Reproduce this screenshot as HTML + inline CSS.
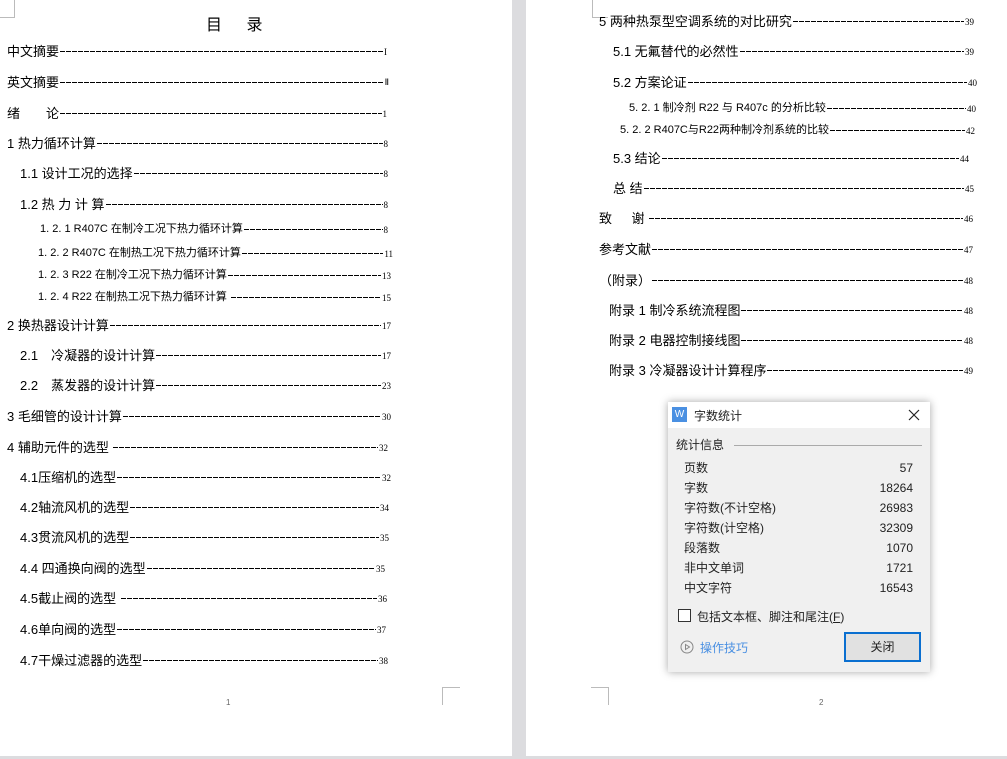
<!DOCTYPE html>
<html><head><meta charset="utf-8"><style>
*{margin:0;padding:0;box-sizing:border-box}
body{width:1007px;height:759px;background:#dcdcdf;position:relative;overflow:hidden;font-family:"Liberation Sans","Noto Sans CJK SC",sans-serif;color:#000}
.pg{position:absolute;top:0;background:#fff;height:756px}
.r{position:absolute;display:flex;align-items:center;height:18px;white-space:nowrap;font-size:13px}
.r .t{flex:none}
.r .l{flex:1;height:1px;margin:0 1px;background:repeating-linear-gradient(90deg,#000 0 5px,transparent 5px 6px);align-self:center;margin-top:2px}
.r .n{flex:none;font-family:"Liberation Serif",serif;font-size:9px;margin-top:3px}
.s{font-size:11px}
.c{position:absolute;border-color:#bbb;border-style:solid;border-width:0}
</style></head><body>
<div class="pg" style="left:0;width:512px"></div>
<div class="pg" style="left:526px;width:481px"></div>
<div class="c" style="left:0;top:0;width:15px;height:18px;border-right-width:1px;border-bottom-width:1px"></div>
<div class="c" style="left:442px;top:687px;width:18px;height:18px;border-left-width:1px;border-top-width:1px"></div>
<div class="c" style="left:591px;top:687px;width:18px;height:18px;border-right-width:1px;border-top-width:1px"></div>
<div class="c" style="left:592px;top:0;width:16px;height:18px;border-left-width:1px;border-bottom-width:1px"></div>
<div style="position:absolute;left:206px;top:11px;font-size:16px;letter-spacing:10px">目 录</div>
<div style="position:absolute;left:226px;top:698px;font-size:8px;color:#666">1</div>
<div style="position:absolute;left:819px;top:698px;font-size:8px;color:#666">2</div>

<div class="r" style="left:7px;top:41px;width:380px"><span class="t">中文摘要</span><span class="l"></span><span class="n">I</span></div>
<div class="r" style="left:7px;top:72px;width:382px"><span class="t">英文摘要</span><span class="l"></span><span class="n">Ⅱ</span></div>
<div class="r" style="left:7px;top:103px;width:380px"><span class="t">绪&emsp;&emsp;论</span><span class="l"></span><span class="n">1</span></div>
<div class="r" style="left:7px;top:133px;width:381px"><span class="t">1 热力循环计算</span><span class="l"></span><span class="n">8</span></div>
<div class="r" style="left:20px;top:163px;width:368px"><span class="t">1.1 设计工况的选择</span><span class="l"></span><span class="n">8</span></div>
<div class="r" style="left:20px;top:194px;width:368px"><span class="t">1.2 热 力 计 算</span><span class="l"></span><span class="n">8</span></div>
<div class="r s" style="left:40px;top:219px;width:348px"><span class="t">1. 2. 1 R407C 在制冷工况下热力循环计算</span><span class="l"></span><span class="n">8</span></div>
<div class="r s" style="left:38px;top:243px;width:355px"><span class="t">1. 2. 2 R407C 在制热工况下热力循环计算</span><span class="l"></span><span class="n">11</span></div>
<div class="r s" style="left:38px;top:265px;width:353px"><span class="t">1. 2. 3 R22 在制冷工况下热力循环计算</span><span class="l"></span><span class="n">13</span></div>
<div class="r s" style="left:38px;top:287px;width:353px"><span class="t">1. 2. 4 R22 在制热工况下热力循环计算&nbsp;</span><span class="l"></span><span class="n">15</span></div>
<div class="r" style="left:7px;top:315px;width:384px"><span class="t">2 换热器设计计算</span><span class="l"></span><span class="n">17</span></div>
<div class="r" style="left:20px;top:345px;width:371px"><span class="t">2.1&emsp;冷凝器的设计计算</span><span class="l"></span><span class="n">17</span></div>
<div class="r" style="left:20px;top:375px;width:371px"><span class="t">2.2&emsp;蒸发器的设计计算</span><span class="l"></span><span class="n">23</span></div>
<div class="r" style="left:7px;top:406px;width:384px"><span class="t">3 毛细管的设计计算</span><span class="l"></span><span class="n">30</span></div>
<div class="r" style="left:7px;top:437px;width:381px"><span class="t">4 辅助元件的选型&nbsp;</span><span class="l"></span><span class="n">32</span></div>
<div class="r" style="left:20px;top:467px;width:371px"><span class="t">4.1压缩机的选型</span><span class="l"></span><span class="n">32</span></div>
<div class="r" style="left:20px;top:497px;width:369px"><span class="t">4.2轴流风机的选型</span><span class="l"></span><span class="n">34</span></div>
<div class="r" style="left:20px;top:527px;width:369px"><span class="t">4.3贯流风机的选型</span><span class="l"></span><span class="n">35</span></div>
<div class="r" style="left:20px;top:558px;width:365px"><span class="t">4.4 四通换向阀的选型</span><span class="l"></span><span class="n">35</span></div>
<div class="r" style="left:20px;top:588px;width:367px"><span class="t">4.5截止阀的选型&nbsp;</span><span class="l"></span><span class="n">36</span></div>
<div class="r" style="left:20px;top:619px;width:366px"><span class="t">4.6单向阀的选型</span><span class="l"></span><span class="n">37</span></div>
<div class="r" style="left:20px;top:650px;width:368px"><span class="t">4.7干燥过滤器的选型</span><span class="l"></span><span class="n">38</span></div>

<div class="r" style="left:599px;top:11px;width:375px"><span class="t">5 两种热泵型空调系统的对比研究</span><span class="l"></span><span class="n">39</span></div>
<div class="r" style="left:613px;top:41px;width:361px"><span class="t">5.1 无氟替代的必然性</span><span class="l"></span><span class="n">39</span></div>
<div class="r" style="left:613px;top:72px;width:364px"><span class="t">5.2 方案论证</span><span class="l"></span><span class="n">40</span></div>
<div class="r s" style="left:629px;top:98px;width:347px"><span class="t">5. 2. 1 制冷剂 R22 与 R407c 的分析比较</span><span class="l"></span><span class="n">40</span></div>
<div class="r s" style="left:620px;top:120px;width:355px"><span class="t">5. 2. 2 R407C与R22两种制冷剂系统的比较</span><span class="l"></span><span class="n">42</span></div>
<div class="r" style="left:613px;top:148px;width:356px"><span class="t">5.3 结论</span><span class="l"></span><span class="n">44</span></div>
<div class="r" style="left:613px;top:178px;width:361px"><span class="t">总 结</span><span class="l"></span><span class="n">45</span></div>
<div class="r" style="left:599px;top:208px;width:374px"><span class="t">致&emsp;&ensp;谢&nbsp;</span><span class="l"></span><span class="n">46</span></div>
<div class="r" style="left:599px;top:239px;width:374px"><span class="t">参考文献</span><span class="l"></span><span class="n">47</span></div>
<div class="r" style="left:599px;top:270px;width:374px"><span class="t">（附录）</span><span class="l"></span><span class="n">48</span></div>
<div class="r" style="left:609px;top:300px;width:364px"><span class="t">附录 1 制冷系统流程图</span><span class="l"></span><span class="n">48</span></div>
<div class="r" style="left:609px;top:330px;width:364px"><span class="t">附录 2 电器控制接线图</span><span class="l"></span><span class="n">48</span></div>
<div class="r" style="left:609px;top:360px;width:364px"><span class="t">附录 3 冷凝器设计计算程序</span><span class="l"></span><span class="n">49</span></div>

<div style="position:absolute;left:668px;top:402px;width:262px;height:270px;background:#f0f0f0;box-shadow:0 0 8px rgba(0,0,0,.35);font-size:12px;color:#222">
 <div style="height:26px;background:#fff;position:relative">
  <div style="position:absolute;left:4px;top:5px;width:15px;height:15px;background:#4a90e2;color:#fff;font-size:10px;text-align:center;line-height:15px">W</div>
  <div style="position:absolute;left:26px;top:5px">字数统计</div>
  <svg style="position:absolute;left:240px;top:7px" width="12" height="12"><path d="M1 1L11 11M11 1L1 11" stroke="#222" stroke-width="1.2"/></svg>
 </div>
 <div style="position:absolute;left:8px;top:34px">统计信息</div>
 <div style="position:absolute;left:66px;top:43px;width:188px;height:1px;background:#aaa"></div>
 <div style="position:absolute;left:16px;top:56px;width:229px;line-height:20px">
  <div style="display:flex;justify-content:space-between"><span>页数</span><span>57</span></div>
  <div style="display:flex;justify-content:space-between"><span>字数</span><span>18264</span></div>
  <div style="display:flex;justify-content:space-between"><span>字符数(不计空格)</span><span>26983</span></div>
  <div style="display:flex;justify-content:space-between"><span>字符数(计空格)</span><span>32309</span></div>
  <div style="display:flex;justify-content:space-between"><span>段落数</span><span>1070</span></div>
  <div style="display:flex;justify-content:space-between"><span>非中文单词</span><span>1721</span></div>
  <div style="display:flex;justify-content:space-between"><span>中文字符</span><span>16543</span></div>
 </div>
 <div style="position:absolute;left:10px;top:207px;width:13px;height:13px;border:1px solid #333;background:#fff"></div>
 <div style="position:absolute;left:29px;top:206px">包括文本框、脚注和尾注(<u>F</u>)</div>
 <svg style="position:absolute;left:12px;top:238px" width="14" height="14"><circle cx="7" cy="7" r="6" fill="none" stroke="#888"/><path d="M5.5 4.5L9.5 7L5.5 9.5Z" fill="none" stroke="#888"/></svg>
 <div style="position:absolute;left:32px;top:237px;color:#4a90e2">操作技巧</div>
 <div style="position:absolute;left:176px;top:230px;width:77px;height:30px;border:2px solid #0a6fd0;background:#e1e1e1;text-align:center;line-height:26px">关闭</div>
</div>
</body></html>
